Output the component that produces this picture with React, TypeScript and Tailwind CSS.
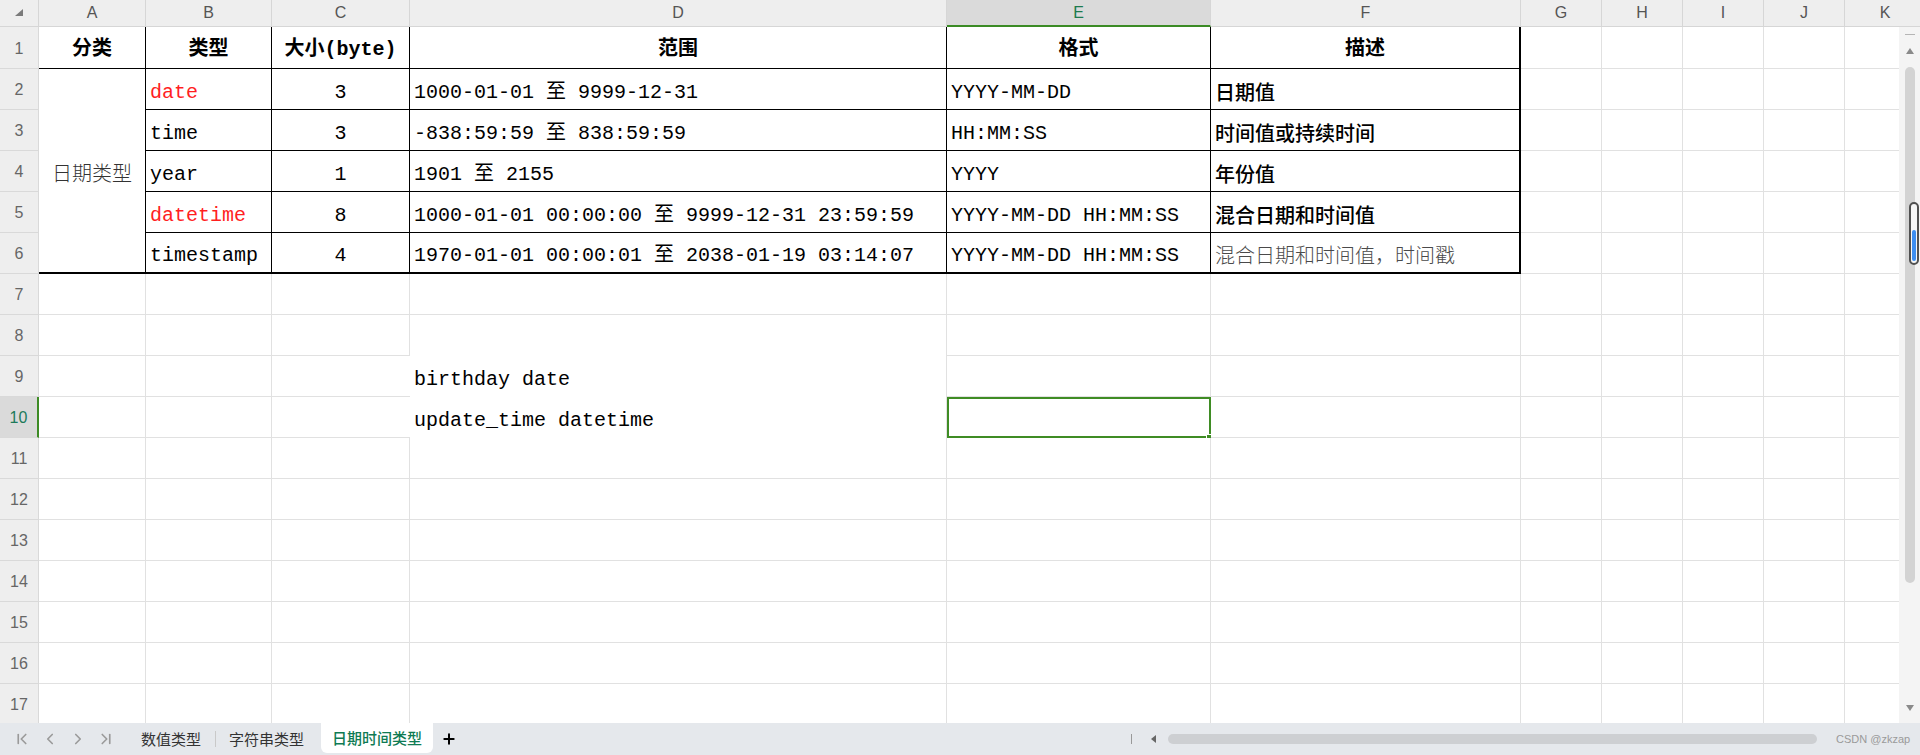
import React from 'react';
import clsx from 'clsx';
import { ChevronFirst, ChevronLeft, ChevronRight, ChevronLast, Plus } from 'lucide-react';

const COLS = ['A', 'B', 'C', 'D', 'E', 'F', 'G', 'H', 'I', 'J', 'K'];
const colTemplate = 'grid-cols-[39px_107px_126px_138px_537px_264px_310px_81px_81px_81px_81px_81px]';

const mono = "font-['Liberation_Mono','Noto_Sans_CJK_SC',monospace] text-[20px]";
const cjkSans = "font-['Noto_Sans_CJK_SC',sans-serif] text-[20px]";

type Row = { type: string; red?: boolean; size: string; range: string; fmt: string; desc: string; soft?: boolean };

const data: Row[] = [
  { type: 'date', red: true, size: '3', range: '1000-01-01 至 9999-12-31', fmt: 'YYYY-MM-DD', desc: '日期值' },
  { type: 'time', size: '3', range: '-838:59:59 至 838:59:59', fmt: 'HH:MM:SS', desc: '时间值或持续时间' },
  { type: 'year', size: '1', range: '1901 至 2155', fmt: 'YYYY', desc: '年份值' },
  { type: 'datetime', red: true, size: '8', range: '1000-01-01 00:00:00 至 9999-12-31 23:59:59', fmt: 'YYYY-MM-DD HH:MM:SS', desc: '混合日期和时间值' },
  { type: 'timestamp', size: '4', range: '1970-01-01 00:00:01 至 2038-01-19 03:14:07', fmt: 'YYYY-MM-DD HH:MM:SS', desc: '混合日期和时间值，时间戳', soft: true },
];

const headers = ['分类', '类型', '大小(byte)', '范围', '格式', '描述'];

const RowHead: React.FC<{ n: number }> = ({ n }) => (
  <div
    className={clsx(
      "flex items-center justify-center pt-[2px] border-b border-[#d9d9d9] font-['Liberation_Sans',sans-serif] text-[16px]",
      n === 10
        ? 'bg-[#dadada] text-[#1d7a5a] border-r-2 border-r-[#3d8b25]'
        : 'bg-[#eeeeee] text-[#666] border-r border-r-[#d9d9d9]'
    )}
  >
    {n}
  </div>
);

const Blank: React.FC<{ className?: string; children?: React.ReactNode }> = ({ className, children }) => (
  <div className={clsx('relative flex items-center bg-white', className ?? 'border-r border-b border-[#e1e1e1]')}>{children}</div>
);

const TableRows = () => {
  const cells: React.ReactNode[] = [];

  // row 1 - headers
  cells.push(<RowHead key="h1" n={1} />);
  headers.forEach((h, i) => {
    cells.push(
      <div
        key={'hd' + i}
        className={clsx(
          'flex items-center justify-center pt-[5px] bg-white border-b border-black font-bold text-black',
          mono,
          i === 5 ? 'border-r-2 border-r-black' : 'border-r border-r-black'
        )}
      >
        {h}
      </div>
    );
  });
  for (let c = 6; c < 11; c++) cells.push(<Blank key={'r1' + c} />);

  // rows 2..6
  data.forEach((r, idx) => {
    const last = idx === data.length - 1;
    const n = idx + 2;
    const bottom = last ? 'border-b-2 border-b-black' : 'border-b border-b-black';
    cells.push(<RowHead key={'h' + n} n={n} />);
    if (idx === 0) {
      cells.push(
        <div
          key="merged"
          className={clsx('row-span-5 flex items-center justify-center pt-[4px] bg-white border-r border-r-black border-b-2 border-b-black text-[#333] font-light', cjkSans)}
        >
          日期类型
        </div>
      );
    }
    cells.push(
      <div
        key={'b' + n}
        className={clsx('flex items-center px-[4px] pt-[7px] bg-white border-r border-r-black', bottom, mono, r.red ? 'text-[#ff1f1f]' : 'text-black')}
      >
        {r.type}
      </div>
    );
    cells.push(
      <div key={'c' + n} className={clsx('flex items-center justify-center pt-[7px] bg-white border-r border-r-black text-black', bottom, mono)}>
        {r.size}
      </div>
    );
    cells.push(
      <div key={'d' + n} className={clsx('flex items-center px-[4px] pt-[7px] whitespace-pre bg-white border-r border-r-black text-black', bottom, mono)}>
        {r.range}
      </div>
    );
    cells.push(
      <div key={'e' + n} className={clsx('flex items-center px-[4px] pt-[7px] whitespace-pre bg-white border-r border-r-black text-black', bottom, mono)}>
        {r.fmt}
      </div>
    );
    cells.push(
      <div
        key={'f' + n}
        className={clsx(
          'flex items-center px-[4px] pt-[5px] whitespace-nowrap bg-white border-r-2 border-r-black',
          bottom,
          cjkSans,
          r.soft ? 'text-[#4a4a4a] font-light' : 'text-black font-medium'
        )}
      >
        {r.desc}
      </div>
    );
    for (let c = 6; c < 11; c++) cells.push(<Blank key={'r' + n + c} />);
  });

  // rows 7..17
  for (let n = 7; n <= 17; n++) {
    cells.push(<RowHead key={'h' + n} n={n} />);
    for (let c = 0; c < 11; c++) {
      const key = 'x' + n + '-' + c;
      if (c === 2 && (n === 9 || n === 10)) {
        cells.push(<Blank key={key} className="border-b border-[#e1e1e1]" />);
      } else if (c === 3 && (n === 8 || n === 9 || n === 10)) {
        cells.push(
          <Blank key={key} className="border-r border-[#e1e1e1] pt-[7px]">
            {n === 9 && <span className={clsx('px-[4px] whitespace-pre text-black', mono)}>birthday date</span>}
            {n === 10 && <span className={clsx('px-[4px] whitespace-pre text-black', mono)}>update_time datetime</span>}
          </Blank>
        );
      } else if (c === 4 && n === 10) {
        cells.push(
          <Blank key={key}>
            <div className="absolute top-0 left-0 -right-px -bottom-px border-2 border-[#3f8c24]" />
            <div className="absolute -right-[3px] -bottom-[4px] w-[7px] h-[7px] bg-[#3f8c24] border border-white" />
          </Blank>
        );
      } else {
        cells.push(<Blank key={key} />);
      }
    }
  }
  return <>{cells}</>;
};

const VScroll = () => (
  <div className="w-[21px] h-full bg-[#f4f4f4] flex flex-col items-center">
    <div className="mt-[7px] w-[10px] h-px bg-[#b5b5b5]" />
    <div className="mt-[13px] w-0 h-0 border-l-[4px] border-r-[4px] border-b-[6px] border-l-transparent border-r-transparent border-b-[#8a8a8a]" />
    <div className="relative mt-[13px] w-[10px] h-[516px] rounded-full bg-[#d3d3d3]">
      <div className="absolute left-[4px] top-[135px] w-[10px] h-[63px] rounded-[5px] border-2 border-[#505050] bg-[#f7f7f7] flex flex-col items-center justify-end pb-[2px]">
        <div className="w-[4px] h-[31px] rounded-full bg-[#3d8ef0]" />
      </div>
    </div>
    <div className="mt-[122px] w-0 h-0 border-l-[4px] border-r-[4px] border-t-[6px] border-l-transparent border-r-transparent border-t-[#8a8a8a]" />
  </div>
);

const TabBar = () => (
  <div className="h-[32px] w-[1920px] flex items-start bg-[#e5e8ec] font-['Noto_Sans_CJK_SC',sans-serif] text-[15px]">
    <div className="w-[127px] h-full flex items-center gap-[10px] pl-[13px] text-[#9a9a9a]">
      <ChevronFirst size={18} strokeWidth={2.2} />
      <ChevronLeft size={18} strokeWidth={2.2} />
      <ChevronRight size={18} strokeWidth={2.2} />
      <ChevronLast size={18} strokeWidth={2.2} />
    </div>
    <div className="h-full flex items-center px-[14px] text-[#333]">数值类型</div>
    <div className="self-center w-px h-[16px] bg-[#c9c9c9]" />
    <div className="h-full flex items-center pl-[13px] pr-[14px] text-[#333]">字符串类型</div>
    <div className="ml-[3px] h-[30px] flex items-center px-[11px] bg-white rounded-b-[6px] text-[#0f7b53] font-medium">日期时间类型</div>
    <div className="h-full flex items-center ml-[8px] text-black">
      <Plus size={16} strokeWidth={3} />
    </div>
    <div className="ml-auto w-[789px] h-full flex items-center">
      <div className="w-px h-[10px] bg-[#999]" />
      <div className="ml-[19px] w-0 h-0 border-t-[4px] border-b-[4px] border-r-[5px] border-t-transparent border-b-transparent border-r-[#666]" />
      <div className="ml-[12px] w-[649px] h-[10px] rounded-full bg-[#cdcfd2]" />
      <div className="ml-[19px] text-[11px] text-[#9a9a9a] font-['Liberation_Sans',sans-serif] whitespace-nowrap">CSDN @zkzap</div>
    </div>
  </div>
);

export default function App() {
  return (
    <div className="w-[1920px] h-[755px] overflow-hidden bg-white flex flex-col">
      {/* column headers */}
      <div className={clsx('grid h-[27px] w-[1920px] overflow-hidden shrink-0', colTemplate)}>
        <div className="bg-[#eeeeee] border-r border-b border-[#d6d6d6] flex items-center justify-center">
          <svg width="8" height="7" viewBox="0 0 8 7" className="-mt-[1px]">
            <polygon points="8,0 8,7 0,7" fill="#7a7a7a" />
          </svg>
        </div>
        {COLS.map((c) =>
          c === 'E' ? (
            <div key={c} className="flex items-center justify-center bg-[#dadada] border-r border-r-[#d6d6d6] border-b-2 border-b-[#3b8b25] text-[#1d7a4e] text-[16px] font-['Liberation_Sans',sans-serif]">
              {c}
            </div>
          ) : (
            <div key={c} className="flex items-center justify-center bg-[#eeeeee] border-r border-b border-[#d6d6d6] text-[#555] text-[16px] font-['Liberation_Sans',sans-serif]">
              {c}
            </div>
          )
        )}
      </div>

      {/* sheet body */}
      <div className="flex h-[696px] shrink-0">
        <div className="w-[1899px] h-full overflow-hidden">
          <div className={clsx('grid grid-rows-[42px_repeat(16,41px)] w-[1926px]', colTemplate)}>
            <TableRows />
          </div>
        </div>
        <VScroll />
      </div>

      <TabBar />
    </div>
  );
}
